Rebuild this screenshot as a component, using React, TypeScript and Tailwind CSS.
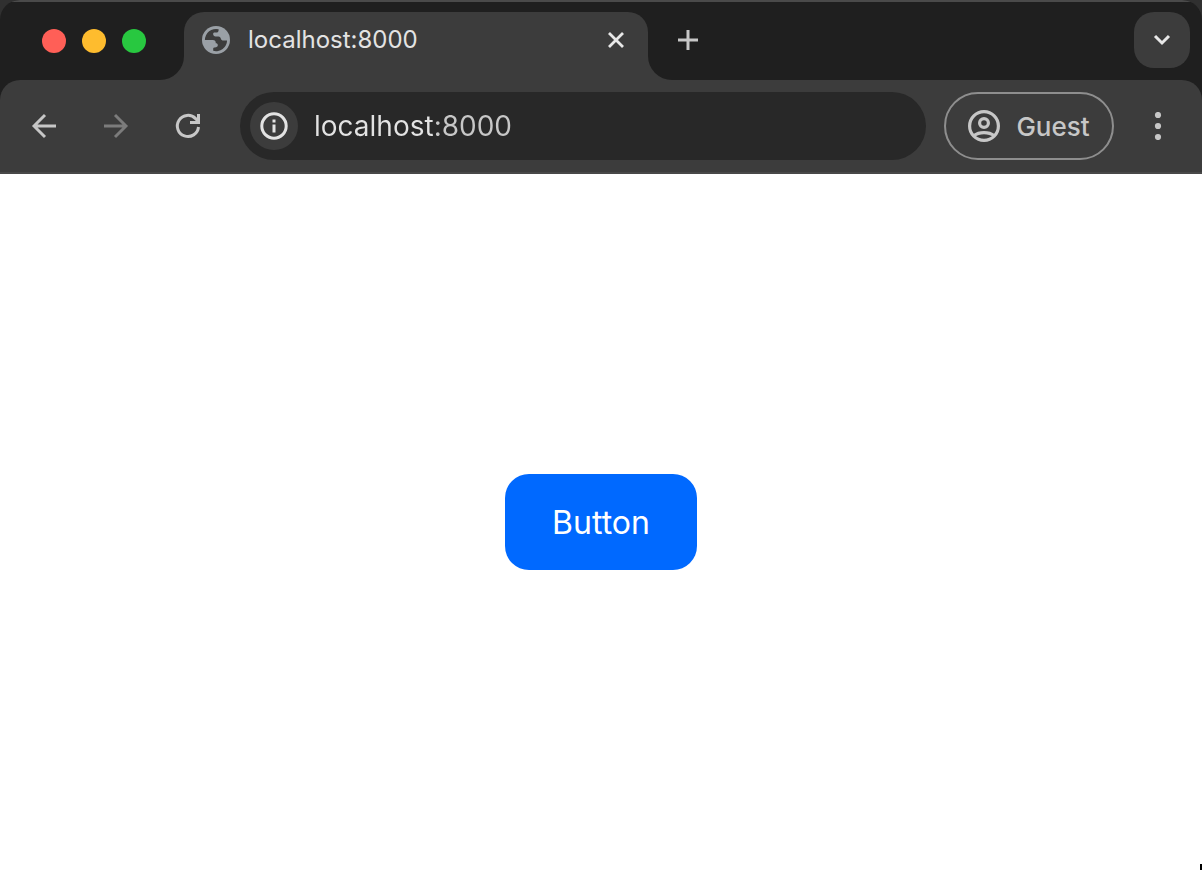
import { useState } from "react";

const iconButton = "flex size-14 shrink-0 items-center justify-center rounded-full";

function BackIcon() {
  return (
    <svg width="32" height="32" viewBox="0 0 32 32" fill="none" stroke="currentColor" strokeWidth="2.9" aria-hidden="true">
      <path d="M28 16H6M17 5L6 16l11 11" />
    </svg>
  );
}

function ForwardIcon() {
  return (
    <svg width="32" height="32" viewBox="0 0 32 32" fill="none" stroke="currentColor" strokeWidth="2.9" aria-hidden="true">
      <path d="M4 16h22M15 5l11 11-11 11" />
    </svg>
  );
}

function ReloadIcon() {
  return (
    <svg width="32" height="32" viewBox="0 0 32 32" fill="none" stroke="currentColor" strokeWidth="3" aria-hidden="true">
      <path d="M26.5 17A10.6 10.6 0 1 1 23.6 8.6L26 11" />
      <path d="M26.5 4v8.5H18" />
    </svg>
  );
}

function GlobeIcon() {
  return (
    <svg width="28" height="28" viewBox="0 0 28 28" aria-hidden="true" className="shrink-0">
      <circle cx="14" cy="14" r="14" fill="#9aa0a6" />
      <path
        d="M2.9 14A11.1 11.1 0 0 1 16.6 3.2V4.2C16.6 5.6 15.6 6.6 14.2 6.6H12.6C11.4 6.6 11 7.4 11.2 8.6C11.4 9.8 12.2 10.4 13.4 10.4H16.4C17.8 10.4 18.4 11.2 18.8 12.4C19.2 13.8 20 14.4 21.4 14.4H25.1A11.1 11.1 0 0 1 11.2 24.8V22.6C11.2 21.8 11.8 21.4 12.8 21.4C14.6 21.4 15.8 20.6 15.8 19.2C15.8 17.8 15 17.2 13.8 17.2C13.8 15 12.8 14 10.8 14Z"
        fill="#3c3c3c"
      />
    </svg>
  );
}

function InfoIcon() {
  return (
    <svg width="28" height="28" viewBox="0 0 28 28" aria-hidden="true">
      <circle cx="14" cy="14" r="12.2" fill="none" stroke="currentColor" strokeWidth="3" />
      <path d="M12.5 12.6h3v8h-3zM12.5 7.4h3v3h-3z" fill="currentColor" />
    </svg>
  );
}

function ProfileIcon() {
  return (
    <svg width="32" height="32" viewBox="0 0 32 32" fill="none" stroke="currentColor" strokeWidth="3.2" aria-hidden="true">
      <circle cx="16" cy="16" r="14.4" />
      <circle cx="16" cy="13" r="4.4" />
      <path d="M6 25.6C11 21.6 21 21.6 26 25.6" />
    </svg>
  );
}

function TabStrip() {
  return (
    <header className="flex h-20 border-t-2 border-[#4a4a4a] bg-[#1f1f1f] pr-3">
      <div className="flex w-40 shrink-0 items-center gap-4 pl-[42px]">
        <button aria-label="Close window" className="size-6 rounded-full bg-[#ff5f57]" />
        <button aria-label="Minimize window" className="size-6 rounded-full bg-[#febc2e]" />
        <button aria-label="Zoom window" className="size-6 rounded-full bg-[#28c840]" />
      </div>
      <div className="flex w-6 shrink-0 bg-[#3c3c3c]">
        <span className="w-full rounded-br-3xl bg-[#1f1f1f]" />
      </div>
      <div className="mt-2.5 flex h-[68px] w-[464px] shrink items-start rounded-t-[20px] bg-[#3c3c3c] pr-4 pl-[18px]">
        <div className="flex h-14 flex-1 items-center gap-[18px]">
          <GlobeIcon />
          <span className="flex-1 text-2xl text-[#e3e3e3]">localhost:8000</span>
          <button aria-label="Close tab" className="flex size-8 items-center justify-center text-[#e8e8e8]">
            <svg width="20" height="20" viewBox="0 0 20 20" stroke="currentColor" strokeWidth="2.8" aria-hidden="true">
              <path d="M3 3l14 14M17 3L3 17" />
            </svg>
          </button>
        </div>
      </div>
      <div className="flex w-6 shrink-0 bg-[#3c3c3c]">
        <span className="w-full rounded-bl-3xl bg-[#1f1f1f]" />
      </div>
      <button aria-label="New tab" className="mt-2.5 -ml-3 flex size-14 shrink-0 items-center justify-center text-[#c7c7c7]">
        <svg width="20" height="20" viewBox="0 0 20 20" stroke="currentColor" strokeWidth="3" aria-hidden="true">
          <path d="M10 0v20M0 10h20" />
        </svg>
      </button>
      <button aria-label="Search tabs" className="mt-2.5 ml-auto flex size-14 shrink-0 items-center justify-center rounded-[20px] bg-[#3c3c3c] text-[#e8e8e8]">
        <svg width="20" height="20" viewBox="0 0 20 20" fill="none" stroke="currentColor" strokeWidth="3" aria-hidden="true">
          <path d="M3 6l7 7 7-7" />
        </svg>
      </button>
    </header>
  );
}

function Toolbar() {
  const [address, setAddress] = useState("localhost:8000");
  return (
    <div className="bg-[#1f1f1f]">
      <nav className="flex items-center rounded-t-[20px] border-b-2 border-[#484848] bg-[#3c3c3c] px-4 py-3 text-[#c7c7c7]">
        <div className="flex gap-4">
          <button aria-label="Back" className={iconButton}>
            <BackIcon />
          </button>
          <button aria-label="Forward" disabled className="flex size-14 shrink-0 items-center justify-center rounded-full text-[#7c7c7c]">
            <ForwardIcon />
          </button>
          <button aria-label="Reload" className={iconButton}>
            <ReloadIcon />
          </button>
        </div>
        <div className="ml-6 flex h-[68px] min-w-0 flex-1 items-center gap-4 rounded-full bg-[#282828] pr-6 pl-2.5">
          <button aria-label="View site information" className="flex size-12 shrink-0 items-center justify-center rounded-full bg-[#3c3c3c] text-[#e3e3e3]">
            <InfoIcon />
          </button>
          <input
            aria-label="Address"
            value={address}
            onChange={(e) => setAddress(e.target.value)}
            className="min-w-0 flex-1 bg-linear-to-r from-[#e3e3e3] from-[120px] to-[#c7c7c7] to-[120px] bg-clip-text text-[28px] text-transparent caret-white outline-none"
          />
        </div>
        <button className="ml-[18px] flex h-[68px] w-[170px] shrink-0 items-center justify-center gap-4 rounded-full border-2 border-[#8e8e8e] text-[26px] font-medium">
          <ProfileIcon />
          Guest
        </button>
        <button aria-label="Menu" className="ml-4 flex size-14 shrink-0 items-center justify-center">
          <svg width="28" height="28" viewBox="0 0 28 28" fill="currentColor" aria-hidden="true">
            <circle cx="14" cy="3" r="3.1" />
            <circle cx="14" cy="14" r="3.1" />
            <circle cx="14" cy="25" r="3.1" />
          </svg>
        </button>
      </nav>
    </div>
  );
}

export default function App() {
  return (
    <div className="relative flex min-h-screen flex-col bg-[#303030] font-['Inter',sans-serif]">
      <div className="overflow-hidden rounded-t-[20px]">
        <TabStrip />
        <Toolbar />
      </div>
      <main className="flex flex-1 items-center justify-center bg-white">
        <button className="h-24 w-48 rounded-3xl bg-[#0069ff] pt-0.5 text-[32px] text-white">Button</button>
      </main>
      <span className="absolute right-0 bottom-0 h-1.5 w-0.5 bg-black" />
    </div>
  );
}
